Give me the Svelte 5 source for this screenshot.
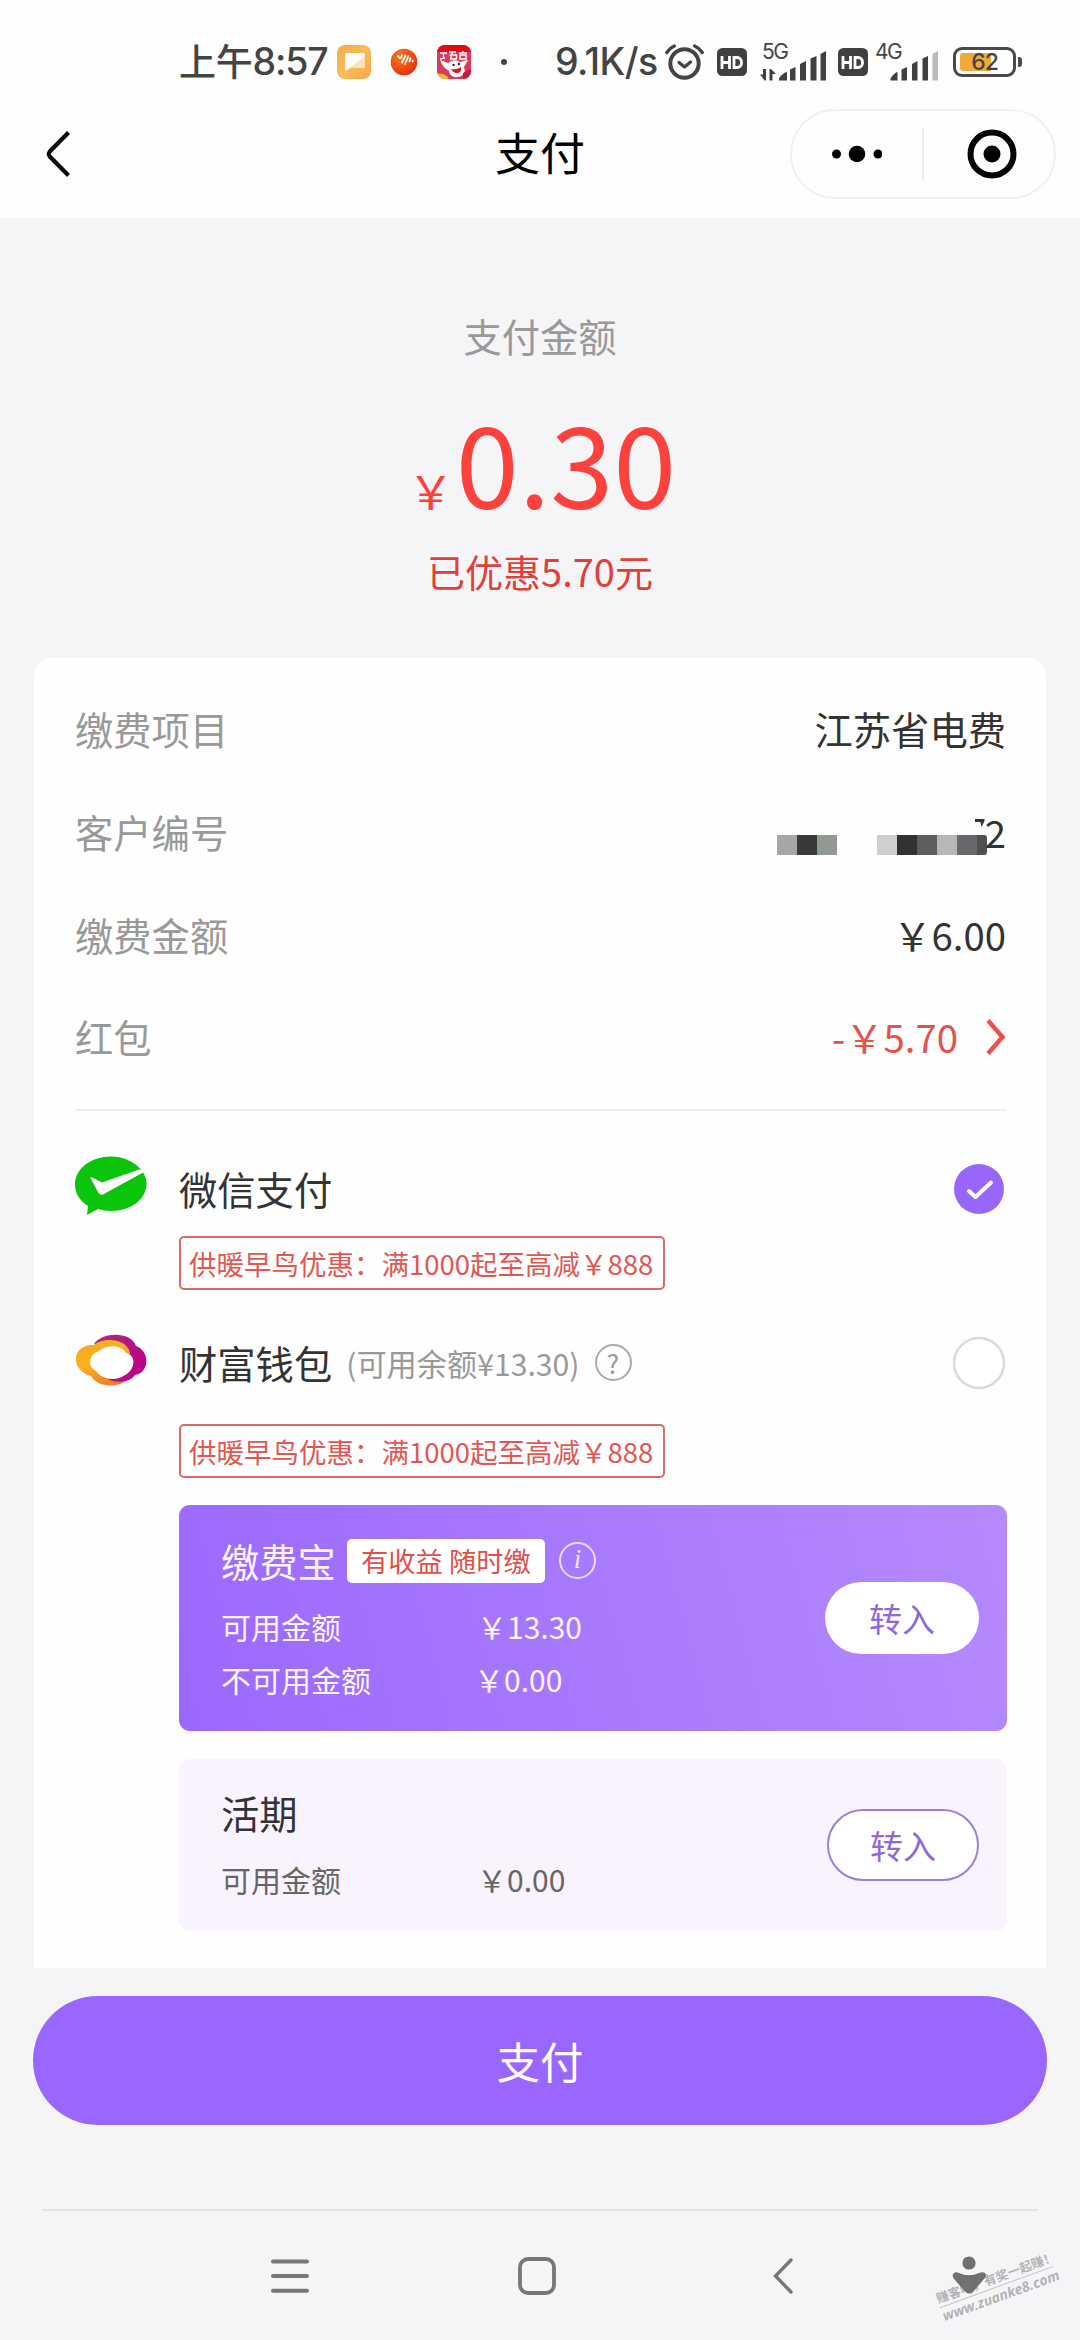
<script>
  const promo = '供暖早鸟优惠：满1000起至高减￥888';
  const mosaicA = ['#a6a6a6', '#393939', '#929992'];
  const mosaicB = ['#cfcfcf', '#313231', '#5c5f5a', '#b7b7b7', '#6a686c'];
</script>

{#snippet hd()}
  <svg class="hd" width="30" height="28" viewBox="0 0 30 28">
    <rect width="30" height="28" rx="5.5" fill="#404040" />
    <path d="M5 8v13M12.500 8v13M5 14.500h7M17 9.500h3a4.500 4.500 0 0 1 4.500 5a4.500 4.500 0 0 1-4.500 5H17z" fill="none" stroke="#fff" stroke-width="2.800" />
  </svg>
{/snippet}

<div class="screen">
  <header class="status">
    <span class="clock"><span class="zh">上午</span>8:57</span>
    <svg class="app1" width="34" height="34" viewBox="0 0 34 34">
      <defs>
        <linearGradient id="amber" x1="0" y1="0" x2="1" y2="1"><stop offset="0" stop-color="#f2ac4f" /><stop offset=".5" stop-color="#f9bc55" /><stop offset="1" stop-color="#f4a849" /></linearGradient>
      </defs>
      <rect width="34" height="34" rx="8" fill="url(#amber)" />
      <path d="M8 9.500q0-1.500 1.500-1.500h17q1.500 0 1.500 1.500v12q0 1.500-1.500 1.500H13l-5 3.500z" fill="#fff" />
      <path d="M28 11v10.500q0 1.500-1.500 1.500H13l-5 3.500z" fill="#fbe3bd" />
    </svg>
    <svg class="app2" width="28" height="28" viewBox="0 0 28 28">
      <defs>
        <radialGradient id="ember" cx=".35" cy=".3" r=".8"><stop offset="0" stop-color="#f97a1c" /><stop offset="1" stop-color="#e22b0e" /></radialGradient>
      </defs>
      <circle cx="14" cy="14" r="13.300" fill="url(#ember)" />
      <path d="M8 8l1.500 2M12 7l-1 3M15.500 7.500l-3.500 7M18.500 8l-3.500 8M20.500 10l-1 3.500M23 12.500l-.5 1" stroke="#fff" stroke-width="1.700" stroke-linecap="round" />
    </svg>
    <svg class="app3" width="34" height="34" viewBox="0 0 34 34">
      <defs><clipPath id="tile"><rect width="34" height="34" rx="8" /></clipPath></defs>
      <g clip-path="url(#tile)">
        <rect width="34" height="34" fill="#dc3a5b" />
        <rect width="34" height="7" fill="#e30b13" />
        <path d="M3 8h7M6.500 8v5M3 14l5-1M12 7h7M15.500 7l-2 7h6v-4h-7M22 8h8M26 6v2M23 10v4h6v-4z" fill="none" stroke="#fff" stroke-width="1.400" />
        <path d="M3 15l8 3q6-5 12-1l8-2-4 7q3 8-6 10-8 1-9-6-6-3-9-11z" fill="#fff" />
        <path d="M14 24q6 1 10-2 1 6-4 6-4 0-6-4z" fill="#d51f28" />
        <circle cx="16.500" cy="20" r="1.200" fill="#222" /><circle cx="22" cy="19" r="1.200" fill="#222" />
        <path d="M0 29q7-2 12 5H0z" fill="#f6bd31" />
        <path d="M26 28l8-4v10h-8z" fill="#c9163c" />
      </g>
    </svg>
    <i class="dot"></i>
    <span class="speed">9.1K/s</span>
    <svg class="alarm" width="42" height="40" viewBox="0 0 42 40">
      <g fill="none" stroke="#444" stroke-linecap="round">
        <circle cx="20.500" cy="21.500" r="14.200" stroke-width="4" />
        <path d="M2.800 10.500q3-4.500 7.500-6.500M38.200 10.500q-3-4.500-7.500-6.500" stroke-width="3.500" />
        <path d="M15 20.500l5.500 4.500 6-5" stroke-width="3.200" stroke-linejoin="round" />
      </g>
    </svg>
    {@render hd()}
    <div class="signal five">
      <span class="net">5G</span>
      <svg width="70" height="38" viewBox="0 0 70 38">
        <g fill="#404040">
          <path d="M0 31.500h3V26h3v11.500H4.500zM9.500 37.500V26H11l5 5h-3.500v6.500z" />
          <path d="M19 37.500v-2q4-6 8-6.500v8.500zM30 37.500V26.500l5.500-2.500v13.500zM40 37.500V21l6-3v19.500zM50.500 37.500V15.500l6-2.500v24.500zM60.500 37.500V11l5.500-3v29.500z" />
        </g>
      </svg>
    </div>
    {@render hd()}
    <div class="signal four">
      <span class="net">4G</span>
      <svg width="66" height="38" viewBox="0 0 66 38">
        <g fill="#404040">
          <path d="M15.500 37.500v-2q4-6 7-6.500v8.500zM26.500 37.500V26.500l5.500-2.500v13.500zM37 37.500V21l5.500-3v19.500zM47.500 37.500V15.500l5.500-2.500v24.500z" />
          <path d="M57.500 37.500V11l5.500-3v29.500z" fill="#bbb" />
        </g>
      </svg>
    </div>
    <div class="battery">
      <div class="cell"><i></i><span>62</span></div>
      <b></b>
    </div>
  </header>

  <nav class="titlebar">
    <svg class="back" width="30" height="50" viewBox="0 0 30 50"><path d="M25.500 3.500L6.800 22.500q-2 2.500 0 5L25.500 46.500" fill="none" stroke="#0a0a0a" stroke-width="4.200" /></svg>
    <h1>支付</h1>
    <div class="capsule">
      <svg width="50" height="20" viewBox="0 0 50 20"><circle cx="4.500" cy="10" r="4.500" /><circle cx="25" cy="10" r="8.300" /><circle cx="46" cy="10" r="4.500" /></svg>
      <i></i>
      <svg class="exit" width="50" height="50" viewBox="0 0 50 50"><circle cx="25" cy="25" r="21.500" fill="none" stroke="#000" stroke-width="6" /><circle cx="25" cy="25" r="8.500" /></svg>
    </div>
  </nav>

  <section class="amount">
    <p class="caption">支付金额</p>
    <p class="total"><small>￥</small>0.30</p>
    <p class="saved">已优惠5.70元</p>
  </section>

  <main class="card">
    <div class="row"><span>缴费项目</span><strong>江苏省电费</strong></div>
    <div class="row">
      <span>客户编号</span>
      <div class="masked">
        <div class="mosaic">{#each mosaicA as c}<i style:background={c}></i>{/each}</div>
        <div class="mosaic">{#each mosaicB as c}<i style:background={c}></i>{/each}<i class="half"></i></div>
        <svg width="10" height="9" viewBox="0 0 10 9"><path d="M0 0h9.500v2L6.500 8 5.500 3H0z" fill="#333" /></svg>
        <strong>2</strong>
      </div>
    </div>
    <div class="row"><span>缴费金额</span><strong>￥6.00</strong></div>
    <div class="row">
      <span>红包</span>
      <div class="bonus">-￥5.70
        <svg width="22" height="40" viewBox="0 0 22 40"><path d="M4 3.500L18.500 20 4 36.500" fill="none" stroke="#ee4f49" stroke-width="4.400" /></svg>
      </div>
    </div>
    <hr />

    <div class="option">
      <svg class="logo" width="74" height="62" viewBox="0 0 74 62">
        <path d="M37 1.500C17 1.500 1 13.500 1 29.500c0 9 5 16.500 13 21.500l-1 9 11-6c4 1.200 9 2 13 2 20 0 35.500-11.500 35.500-27.500 0-4.500-1.500-8.500-4-12C62 7.500 50 1.500 37 1.500z" fill="#0bc40c" />
        <path d="M16.500 23q0-1 2-.5l9.500 5 37-13q3-.5 5 2.500L29 39.500q-3 1-4.500-1.500z" fill="#fff" />
      </svg>
      <span class="name">微信支付</span>
      <svg class="radio" width="54" height="54" viewBox="0 0 54 54"><circle cx="27" cy="27" r="25" fill="#9966fc" /><path d="M17 29l6.500 6L39 20.500" fill="none" stroke="#fff" stroke-width="4" stroke-linecap="round" stroke-linejoin="round" /></svg>
    </div>
    <div class="promo">{promo}</div>

    <div class="option second">
      <svg class="logo" width="74" height="54" viewBox="0 0 74 54">
        <defs>
          <linearGradient id="gold" x1="0" y1="0" x2=".6" y2="1"><stop offset="0" stop-color="#f2a51d" /><stop offset=".5" stop-color="#f9b21f" /><stop offset="1" stop-color="#ef7a2a" /></linearGradient>
          <linearGradient id="plum" x1="0" y1="0" x2="1" y2=".6"><stop offset="0" stop-color="#a8327a" /><stop offset="1" stop-color="#bd0089" /></linearGradient>
        </defs>
        <path d="M20 11C28-1 57-2 62 13 76 18 76 39 61 42 56 49 44 51 34 48L40 18z" fill="url(#plum)" />
        <path d="M20 12C29 4 53 5 56 20L50 40 34 46.500Q43 50 52 48C42 55 23 54 17 43-4 38-3 11 20 12z" fill="url(#gold)" />
        <path d="M25 18C33 11 48 12 52 20 64 23 60 38 51 42 42 49 27 46 22 38 13 33 15 21 25 18z" fill="#fff" />
      </svg>
      <span class="name">财富钱包</span>
      <span class="balance">(可用余额¥13.30)</span>
      <span class="help">?</span>
      <svg class="radio" width="54" height="54" viewBox="0 0 54 54"><circle cx="27" cy="27" r="25" fill="#fff" stroke="#dadada" stroke-width="2.500" /></svg>
    </div>
    <div class="promo lower">{promo}</div>

    <section class="account primary">
      <div class="info">
        <div class="head"><h2>缴费宝</h2><span class="badge">有收益 随时缴</span><span class="tip">i</span></div>
        <div class="line"><span>可用金额</span><span>￥13.30</span></div>
        <div class="line"><span>不可用金额</span><span class="nudge">￥0.00</span></div>
      </div>
      <button>转入</button>
    </section>
    <section class="account plain">
      <div class="info">
        <div class="head"><h2>活期</h2></div>
        <div class="line"><span>可用金额</span><span>￥0.00</span></div>
      </div>
      <button>转入</button>
    </section>
  </main>

  <button class="pay">支付</button>

  <footer>
    <svg class="menu" width="38" height="36" viewBox="0 0 38 36"><path d="M2 3.500h34M2 18h34M2 32.800h34" stroke="#777" stroke-width="4" stroke-linecap="round" /></svg>
    <svg class="home" width="38" height="38" viewBox="0 0 38 38"><rect x="2" y="2" width="34" height="34" rx="8" fill="none" stroke="#777" stroke-width="3.800" /></svg>
    <svg class="prev" width="22" height="38" viewBox="0 0 22 38"><path d="M19 3L3.500 19 19 35" fill="none" stroke="#777" stroke-width="3.400" stroke-linecap="round" /></svg>
    <svg class="person" width="36" height="42" viewBox="0 0 36 42"><circle cx="18" cy="8" r="6.600" fill="#707070" /><path d="M2 19q2-3 6-1 10 4.500 20 0 5-2 7 1 .5 3-2 5L22 37q-3.500 3-7.500 0L3.500 24.500Q1 22 2 19z" fill="#707070" /></svg>
    <div class="watermark"><span>赚客吧，有奖一起赚！</span><span class="site">www.zuanke8.com</span></div>
  </footer>
</div>

<style>
  :global(body) { margin: 0; background: #f5f5f8; }
  .screen {
    width: 1080px; height: 2340px; overflow: hidden; position: relative;
    display: flex; flex-direction: column; box-sizing: border-box;
    background: #f5f5f8; color: #333;
    font-family: "Noto Sans CJK SC", "Noto Sans", sans-serif;
  }
  .screen *, .screen *::before { box-sizing: border-box; }
  svg { display: block; flex: none; }
  p, h1, h2 { margin: 0; font-weight: 400; }
  button { font: inherit; border: 0; padding: 0; }

  .status {
    height: 90px; padding: 34px 0 0 179px; background: #fefefe; flex: none;
    display: flex; align-items: center; color: #444; white-space: nowrap;
    font: 500 37.500px/56px Inter, "Noto Sans CJK SC", sans-serif;
  }
  .clock { width: 158px; letter-spacing: -1.100px; display: flex; font-weight: 500; }
  .zh { font: 500 37px/52px "Noto Sans CJK SC", sans-serif; letter-spacing: -.3px; }
  .status > * { flex: none; }
  .app2 { margin-left: 19px; }
  .app3 { margin-left: 19px; }
  .dot { width: 6px; height: 6px; border-radius: 50%; background: #444; margin-left: 30px; }
  .speed { width: 109px; margin-left: 48px; letter-spacing: -.6px; }
  .alarm { width: 42px; }
  .hd { margin-left: 11px; }
  .signal { position: relative; height: 38px; }
  .net { position: absolute; top: -1px; left: 2px; font: 400 21px/20px Inter, sans-serif; letter-spacing: -1.500px; }
  .five { margin-left: 13px; width: 67px; }
  .four { margin-left: 7px; width: 66px; }
  .four .net { left: 0; }
  .battery { display: flex; align-items: center; gap: 2px; margin-left: 12px; }
  .cell { position: relative; width: 63px; height: 30px; border: 3px solid #4a494f; border-radius: 9px; padding: 3px 4px; }
  .cell i { display: block; width: 31px; height: 18px; background: #f1aa3a; border-radius: 3px 0 0 3px; }
  .cell span { position: absolute; inset: 0; text-align: center; font: 500 23px/25px Inter, sans-serif; letter-spacing: -1px; }
  .battery b { width: 4px; height: 10px; border-radius: 0 3px 3px 0; background: #4a494f; }

  .titlebar {
    height: 129px; flex: none; background: #fefefe; border-bottom: 1px solid #f4f4f5;
    display: grid; grid-template-columns: 1fr 100px 1fr; align-items: center;
  }
  .back { margin-left: 43px; }
  .titlebar h1 { color: #000; font-size: 45px; line-height: 60px; text-align: center; margin-top: -5px; font-weight: 400; }
  .capsule {
    justify-self: end; margin-right: 24px; width: 266px; height: 90px; border: 2px solid #f1f1f1; border-radius: 45px;
    display: grid; grid-template-columns: 1fr 2px 1fr; align-items: center; justify-items: center;
  }
  .capsule i { width: 2px; height: 54px; background: #eee; }
  .exit { margin-left: 5px; }

  .amount { height: 439px; flex: none; text-align: center; }
  .caption { padding-top: 87px; font-size: 38.300px; line-height: 60px; color: #999; }
  .total { margin-top: 29px; height: 130px; font-size: 113.500px; line-height: 130px; color: #fd423d; display: flex; justify-content: center; align-items: baseline; padding-left: 4px; }
  .total small { font-size: 46px; margin-right: 2px; }
  .saved { margin-top: 16px; font-size: 38px; line-height: 60px; color: #e33e38; }

  .card { margin: 0 34px; padding: 20px 40px 37px 41px; height: 1310px; flex: none; background: #fefefe; border-radius: 18px 18px 0 0; display: flex; flex-direction: column; }
  .row { height: 102.700px; flex: none; display: flex; justify-content: space-between; align-items: center; font-size: 38.300px; line-height: 56px; }
  .row > span { color: #999; }
  .row strong { font-weight: 400; }
  .masked { display: flex; align-items: center; }
  .mosaic { display: flex; margin-top: 25px; }
  .mosaic + .mosaic { margin-left: 40px; }
  .mosaic i { width: 20px; height: 20px; }
  .mosaic .half { width: 10px; background: #505050; border-radius: 0 3px 3px 0; }
  .masked svg { margin: -18px 0 0 -12px; }
  .bonus { display: flex; align-items: center; gap: 26px; color: #e5524c; }
  hr { width: 100%; height: 2px; margin: 20px 0 0; border: 0; background: #eee; flex: none; }

  .option { height: 60px; margin-top: 48px; flex: none; display: flex; align-items: center; }
  .option.second { margin-top: 43px; }
  .logo { margin-left: -1px; margin-top: -5px; }
  .name { margin-left: 31px; font-size: 38.300px; line-height: 56px; white-space: nowrap; }
  .balance { margin-left: 14px; font-size: 30.200px; line-height: 44px; color: #999; white-space: nowrap; }
  .help { margin-left: 15px; width: 37px; height: 37px; border: 2px solid #aaa; border-radius: 50%; color: #999; font: 26px/33px "Noto Sans CJK SC", sans-serif; text-align: center; }
  .radio { margin-left: auto; }
  .promo {
    align-self: flex-start; margin: 17px 0 0 104px; width: 486px; height: 54px; flex: none;
    border: 2px solid #dc6964; border-radius: 5px; color: #e15852; padding-left: 8px;
    font-size: 27.500px; line-height: 50px; white-space: nowrap;
  }
  .promo.lower { margin-top: 31px; }

  .account { margin-left: 104px; width: 828px; flex: none; border-radius: 11px; display: flex; justify-content: space-between; align-items: center; padding: 0 28px 0 42px; }
  .head { display: flex; align-items: center; height: 56px; }
  .head h2 { font-size: 38.300px; line-height: 52px; }
  .line { display: grid; grid-template-columns: 256px auto; font-size: 30px; line-height: 53px; white-space: nowrap; }
  .primary { margin-top: 27px; height: 226px; background: linear-gradient(75deg, #9b68fe 0%, #a678fd 45%, #b58aff 100%); color: #fdf4ff; }
  .primary .head { margin-bottom: 11px; margin-top: -1px; }
  .primary .info { margin-top: 4px; }
  .nudge { margin-left: -3px; }
  .badge { margin-left: 11px; width: 198px; height: 44px; background: #fff; border-radius: 5px; color: #e1504b; font-size: 27.300px; line-height: 43px; text-align: center; }
  .tip { margin-left: 14px; width: 37px; height: 37px; border: 2px solid #ecd9ff; border-radius: 50%; text-align: center; font: italic 27px/31px "Liberation Serif", serif; color: #f3e3ff; }
  .account button { width: 154px; height: 72px; border-radius: 36px; background: #fff; color: #8f68dc; font-size: 33px; line-height: 68px; }
  .plain { margin-top: 28px; height: 172px; background: #f8f3ff; }
  .plain .head { margin-bottom: 12px; margin-top: 1px; }
  .plain .line { color: #666; }
  .account.plain button { width: 152px; border: 2px solid #9b7fd8; }

  .pay { margin: 28px 33px 0; height: 129px; flex: none; border-radius: 65px; background: #9966ff; color: #fff; font-size: 43.500px; line-height: 126px; }

  footer { position: relative; margin: 84px 42px 0; height: 131px; flex: none; border-top: 2px solid #e4e4e6; display: flex; align-items: flex-start; padding-top: 46px; }
  .menu { margin: 1px 0 0 229px; }
  .home { margin-left: 209px; }
  .prev { margin-left: 216px; }
  .person { margin: -2px 0 0 157px; }
  .watermark {
    position: absolute; left: 894px; top: 56px; width: 124px; transform: rotate(-20deg);
    color: rgba(120, 120, 120, .55); white-space: nowrap; display: flex; flex-direction: column;
  }
  .watermark span { font-size: 12.600px; line-height: 19px; font-weight: 700; border-bottom: 1px solid rgba(120, 120, 120, .4); width: 120px; }
  .watermark .site { border: 0; font: italic 700 14px/18px "Noto Sans", sans-serif; }
</style>
